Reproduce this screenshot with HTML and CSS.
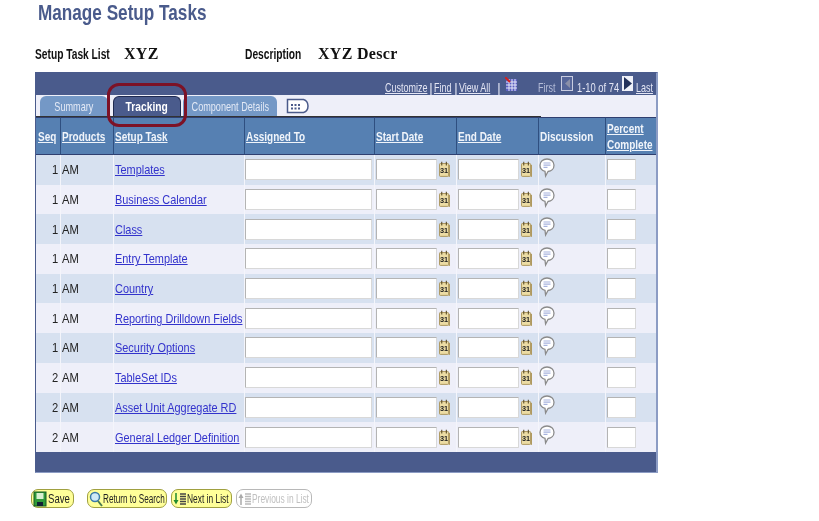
FILE: index.html
```html
<!DOCTYPE html>
<html lang="en">
<head>
<meta charset="utf-8">
<title>Manage Setup Tasks</title>
<link rel="stylesheet" href="styles.css">
</head>
<body>
<svg class="defs" width="0" height="0">
  <defs>
    <symbol id="cal" viewBox="0 0 12 18">
      <rect x="0.5" y="2.5" width="10" height="14" rx="1" fill="#ecdca4" stroke="#a68f55"/>
      <rect x="10.5" y="4" width="1.5" height="13" fill="#b09a60"/>
      <path d="M3 0.5v4M8 0.5v4" stroke="#5a4c28" stroke-width="1.2"/>
      <text x="5.5" y="13" class="caltext">31</text>
    </symbol>
    <symbol id="bubble" viewBox="0 0 16 20">
      <path d="M8 1C4 1 1 3.600 1 7.200c0 3 2.200 5.400 5 6.100l.6 4.700 2.400-4.500c3.400-.3 6-2.900 6-6.300C15 3.600 12 1 8 1z" fill="#fff" stroke="#8a8a8a" stroke-width="1.300"/>
      <path d="M4.500 5h7M4.500 7.200h7M4.500 9.400h4" stroke="#a6b2de" stroke-width="1.200"/>
    </symbol>
  </defs>
</svg>
<h1 class="title"><span class="sq sq-title">Manage Setup Tasks</span></h1>
<div class="meta">
  <span class="label label-list"><span class="sq">Setup Task List</span></span><span class="value value-list">XYZ</span>
  <span class="label label-desc"><span class="sq">Description</span></span><span class="value">XYZ Descr</span>
</div>
<div class="grid-frame">
  <div class="navbar">
    <a class="navlink w-cust" href="#"><span class="sq">Customize</span></a><span class="sep"><span>|</span></span>
    <a class="navlink w-find" href="#"><span class="sq">Find</span></a><span class="sep"><span>|</span></span>
    <a class="navlink w-view" href="#"><span class="sq">View All</span></a><span class="sep"><span>|</span></span>
    <svg class="gridicon" width="13" height="15" viewBox="0 0 13 15"><rect x="1" y="2" width="11" height="12" fill="#5a5fc0"/><path d="M1 5h11M1 8h11M1 11h11M4 2v12M7 2v12M10 2v12" stroke="#e6e8f8" stroke-width="1"/><path d="M0 0l5 5" stroke="#d02020" stroke-width="2"/></svg>
    <span class="first"><span class="sq">First</span></span>
    <span class="pager pager-off"><svg width="9" height="11" viewBox="0 0 9 11"><path d="M7 1v9L2 5.500z" fill="#8a8fa8"/></svg></span>
    <span class="range"><span class="sq">1-10 of 74</span></span>
    <span class="pager pager-on"><svg width="9" height="13" viewBox="0 0 9 13"><path d="M1 0v13l8-6.500z" fill="#22305a"/></svg></span>
    <a class="navlink w-last" href="#"><span class="sq">Last</span></a>
  </div>
  <div class="tabstrip">
    <span class="tab tab-summary"><span class="sq">Summary</span></span>
    <span class="tab tab-active"><span class="sq">Tracking</span></span>
    <span class="tab tab-details"><span class="sq">Component Details</span></span>
    <span class="tab-icon"><svg width="24" height="16" viewBox="0 0 24 16"><path d="M1.500 1.500h16c3 1 4.500 3.500 4.500 6.500s-1.500 5.500-4.500 6.500h-16z" fill="#fff" stroke="#4a5a8a" stroke-width="1.500"/><path d="M5 6h2v2H5zm3.500 0h2v2h-2zm3.500 0h2v2h-2zM5 9.500h2v2H5zm3.500 0h2v2h-2zm3.500 0h2v2h-2z" fill="#4a5a8a"/></svg></span>
  </div>
  <table class="tasks">
    <colgroup>
      <col class="c-seq"><col class="c-prod"><col class="c-task"><col class="c-assign"><col class="c-date"><col class="c-date"><col class="c-disc"><col class="c-pct">
    </colgroup>
    <thead>
      <tr>
        <th><a href="#"><span class="sq">Seq</span></a></th>
        <th><a href="#"><span class="sq">Products</span></a></th>
        <th><a href="#"><span class="sq">Setup Task</span></a></th>
        <th><a href="#"><span class="sq">Assigned To</span></a></th>
        <th><a href="#"><span class="sq">Start Date</span></a></th>
        <th><a href="#"><span class="sq">End Date</span></a></th>
        <th><span class="sq">Discussion</span></th>
        <th class="th-pct"><a href="#"><span class="sq">Percent</span><br><span class="sq">Complete</span></a></th>
      </tr>
    </thead>
    <tbody id="rows"></tbody>
  </table>
  <div class="gridfoot"></div>
</div>
<div class="actions">
  <button class="btn btn-save" type="button"><svg width="14" height="16" viewBox="0 0 14 16"><rect x="1" y="1" width="12" height="14" fill="#2f9a3a" stroke="#145a20"/><rect x="3.500" y="2" width="7" height="6" fill="#d8f0d0"/><rect x="4" y="11" width="6" height="4" fill="#123"/></svg><span class="sq">Save</span></button>
  <button class="btn btn-return" type="button"><svg width="14" height="16" viewBox="0 0 14 16"><circle cx="6" cy="6" r="4.500" fill="#cfeaf8" stroke="#3a7aa8" stroke-width="1.500"/><path d="M9 10l4 5" stroke="#4a7a50" stroke-width="2"/></svg><span class="sq">Return to Search</span></button>
  <button class="btn btn-next" type="button"><svg width="14" height="14" viewBox="0 0 14 14"><path d="M3 1v8" stroke="#1f8a30" stroke-width="1.500"/><path d="M0.500 8h5L3 12.500z" fill="#1f8a30"/><path d="M7 2h6M7 4.500h6M7 7h6M7 9.500h6M7 12h6" stroke="#444" stroke-width="1.300"/></svg><span class="sq">Next in List</span></button>
  <button class="btn btn-prev" type="button" disabled><svg width="14" height="14" viewBox="0 0 14 14"><path d="M3 13V5" stroke="#aaa" stroke-width="1.500"/><path d="M0.500 6h5L3 1.500z" fill="#aaa"/><path d="M7 2h6M7 4.500h6M7 7h6M7 9.500h6M7 12h6" stroke="#bbb" stroke-width="1.300"/></svg><span class="sq">Previous in List</span></button>
</div>
<div class="callout"></div>
<script src="rows.js"></script>
</body>
</html>
```
FILE: rows.js
```js
const data = [
  [1, "Templates"], [1, "Business Calendar"], [1, "Class"], [1, "Entry Template"], [1, "Country"],
  [1, "Reporting Drilldown Fields"], [1, "Security Options"], [2, "TableSet IDs"],
  [2, "Asset Unit Aggregate RD"], [2, "General Ledger Definition"]
];
const cal = '<svg class="cal" width="11" height="17"><use href="#cal"/></svg>';
document.getElementById("rows").innerHTML = data.map(([seq, task]) => `
  <tr>
    <td class="num"><span class="sq">${seq}</span></td>
    <td><span class="sq">AM</span></td>
    <td class="task"><a href="#"><span class="sq">${task}</span></a></td>
    <td><span class="field-wrap"><input class="field f-assign" type="text" aria-label="Assigned To"></span></td>
    <td><span class="field-wrap"><input class="field f-date" type="text" aria-label="Start Date">${cal}</span></td>
    <td><span class="field-wrap"><input class="field f-date" type="text" aria-label="End Date">${cal}</span></td>
    <td><svg class="bubble" width="16" height="20"><use href="#bubble"/></svg></td>
    <td><input class="field f-pct" type="text" aria-label="Percent Complete"></td>
  </tr>`).join("");
```
FILE: styles.css
```css
html, body { margin: 0; padding: 0; background: #fff; }
body {
  position: relative;
  width: 819px;
  height: 521px;
  overflow: hidden;
  font-family: "Liberation Sans", Arial, sans-serif;
  font-size: 13px;
  color: #222;
  filter: blur(0.35px);
}
.defs { position: absolute; }
.caltext { font: bold 8px "Liberation Sans", sans-serif; text-anchor: middle; fill: #222; }

/* The reference text is horizontally squeezed; no condensed face is installed. */
.sq {
  display: inline-block;
  white-space: nowrap;
  transform: scaleX(var(--sq, 0.86));
  transform-origin: 0 50%;
}
a .sq { text-decoration: underline; }

.title {
  margin: 0;
  padding: 0 0 0 38px;
  height: 28px;
  font-size: 22px;
  line-height: 25px;
  font-weight: bold;
  color: #4a5b8c;
}
.sq-title { --sq: 0.78; }
.meta {
  display: flex;
  align-items: center;
  height: 20px;
  margin-top: 16px;
  padding-left: 35px;
}
.label { font-weight: bold; font-size: 14px; color: #111; --sq: 0.73; white-space: nowrap; }
.value { font-family: "Liberation Serif", serif; font-weight: bold; font-size: 16px; letter-spacing: 0.3px; color: #111; }
.label-list { width: 89px; }
.value-list { width: 121px; }
.label-desc { width: 73px; }

.grid-frame {
  box-sizing: border-box;
  width: 623px;
  height: 401px;
  margin: 8px 0 0 35px;
  border: 1px solid #4a5b8c;
  border-right: 2px solid #8c9cc4;
  border-bottom: 2px solid #8c9cc4;
  background: #eeeff9;
}
.navbar {
  display: flex;
  align-items: flex-end;
  height: 22px;
  padding-left: 349px;
  background: #4a5b8c;
  color: #e4e6f4;
  font-size: 13px;
  line-height: 15px;
  --sq: 0.69;
}
.navlink { color: #e4e6f4; flex: none; }
.w-cust { width: 43px; }
.w-find { width: 19px; }
.w-view { width: 37px; }
.w-last { width: 20px; }
.sep { flex: none; width: 6px; text-align: center; }
.gridicon { flex: none; margin: 0 0 3px 3px; }
.first { flex: none; width: 18px; margin-left: 20px; color: #b4bcd8; }
.pager { flex: none; display: flex; align-items: center; justify-content: center; }
.pager-off { box-sizing: border-box; width: 12px; height: 15px; margin: 0 0 4px 5px; border: 1px solid #c8cce0; background: #56669a; }
.pager-on { width: 11px; height: 15px; margin: 0 3px 4px 5px; background: #eef0f8; }
.range { flex: none; width: 40px; margin-left: 4px; color: #e4e6f4; --sq: 0.72; }

.tabstrip {
  position: relative;
  display: flex;
  align-items: flex-end;
  box-sizing: border-box;
  height: 22px;
  padding: 0 0 1px 4px;
  font-size: 13px;
}
.tabstrip::after {
  content: "";
  position: absolute;
  left: 0;
  bottom: 0;
  width: 505px;
  height: 1px;
  background: #333;
}
.tab {
  box-sizing: border-box;
  flex: none;
  display: flex;
  align-items: center;
  justify-content: center;
  height: 20px;
  border-radius: 6px 6px 0 0;
  background: #7498c6;
  color: #e4eaf6;
}
.tab .sq { transform-origin: 50% 50%; --sq: 0.7; }
.tab-summary { width: 68px; }
.tab-active {
  width: 68px;
  margin-left: 5px;
  background: #4a5b8c;
  border: 1px solid #1f2a50;
  border-bottom: 0;
  color: #fff;
  font-weight: bold;
}
.tab-active .sq { --sq: 0.79; }
.tab-details { width: 94px; margin-left: 2px; }
.tab-icon { flex: none; display: flex; margin: 0 0 2px 9px; }

.tasks {
  width: 620px;
  table-layout: fixed;
  border-collapse: separate;
  border-spacing: 0;
}
.c-seq { width: 24px; }
.c-prod { width: 53px; }
.c-task { width: 131px; }
.c-assign { width: 130px; }
.c-date { width: 82px; }
.c-disc { width: 67px; }
.c-pct { width: 51px; }
.tasks th {
  box-sizing: border-box;
  height: 38px;
  padding: 1px 1px 0;
  background: #5680b2;
  border-top: 1px solid #2f3f70;
  border-bottom: 1px solid #2f3f70;
  border-left: 1px solid #2f4f80;
  color: #f0f4fa;
  text-align: left;
  font-size: 13.500px;
  line-height: 16px;
  font-weight: bold;
  white-space: nowrap;
  --sq: 0.74;
}
.tasks th:first-child { border-left: 0; padding-left: 2px; }
.tasks th a { color: #f0f4fa; }
.tasks td {
  box-sizing: border-box;
  height: 29.7px;
  padding: 0;
  border-left: 1px solid #f4f5fb;
  font-size: 13px;
  color: #222;
  white-space: nowrap;
}
.tasks td:first-child { border-left: 0; }
.tasks td.num { text-align: right; padding-right: 2px; }
.tasks td.num .sq { transform-origin: 100% 50%; }
.tasks td.task { padding-left: 1px; }
.tasks td.task .sq { --sq: 0.84; }
.tasks td a { color: #3333cc; }
.tasks tbody tr:nth-child(odd) td { background: #d7e1f0; }
.tasks tbody tr:nth-child(even) td { background: #eeeff9; }
.tasks td:nth-child(2) { padding-left: 1px; }

.field-wrap { display: flex; align-items: center; gap: 2px; }
.field {
  box-sizing: border-box;
  display: block;
  flex: none;
  height: 21px;
  margin: 0;
  padding: 0;
  background: #fff;
  border: 1px solid #b4b4b4;
  border-right-color: #d8d8d8;
  border-bottom-color: #d8d8d8;
  border-radius: 1px;
}
.f-assign { width: 127px; }
.f-date { width: 61px; margin-left: 1px; }
.f-pct { width: 29px; margin-left: 1px; }
.cal { flex: none; }
.bubble { display: block; margin: -4px 0 0 0; }

.gridfoot { height: 20px; background: #4a5b8c; }

.actions {
  display: flex;
  align-items: center;
  margin: 16px 0 0 31px;
  height: 19px;
}
.btn {
  box-sizing: border-box;
  flex: none;
  display: flex;
  align-items: center;
  justify-content: flex-start;
  height: 19px;
  padding: 0 0 0 1px;
  background: #ffff99;
  border: 1px solid #a0a040;
  border-radius: 7px;
  font-family: "Liberation Sans", sans-serif;
  font-size: 12px;
  color: #222;
  --sq: 0.7;
}
.btn svg { flex: none; margin-right: 0; }
.btn-save { width: 43px; --sq: 0.8; }
.btn-save svg { margin-right: 1px; }
.btn-return { width: 80px; margin-left: 13px; --sq: 0.68; }
.btn-next { width: 61px; margin-left: 4px; }
.btn-prev { width: 76px; margin-left: 4px; background: #fff; border-color: #b8b8b8; color: #c0c0c0; }

.callout {
  position: absolute;
  left: 107px;
  top: 83px;
  width: 80px;
  height: 44px;
  box-sizing: border-box;
  border: 3px solid #7d1226;
  border-radius: 12px;
}
```
